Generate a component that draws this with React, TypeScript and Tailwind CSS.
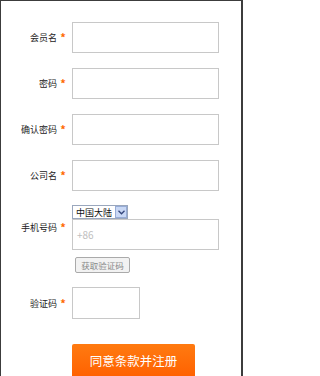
const FONT = { fontFamily: '"Noto Sans CJK SC", "Liberation Sans", sans-serif' };

function Label({ text }: { text: string }) {
  return (
    <div className="flex items-center shrink-0">
      <span className="w-[56px] text-right text-[9px] leading-none text-[#222]">{text}</span>
      <span className="mr-[3px] w-[12px] text-center text-[11px] font-bold leading-none text-[#ff6a00]">*</span>
    </div>
  );
}

function Field({ label, width = "w-[147px]", height = "h-[31px]", className = "" }: { label: string; width?: string; height?: string; className?: string }) {
  return (
    <div className={`flex items-center ${className}`}>
      <Label text={label} />
      <input className={`${width} ${height} border border-[#c8c8c8] bg-white outline-none`} />
    </div>
  );
}

export default function App() {
  return (
    <div
      className="h-[376px] w-[243px] overflow-hidden border-t border-l border-r-2 border-[#3c3c3c] bg-white"
      style={FONT}
    >
      <div className="flex flex-col">
        <Field label="会员名" className="mt-[21px]" />
        <Field label="密码" className="mt-[15px]" />
        <Field label="确认密码" className="mt-[15px]" />
        <Field label="公司名" className="mt-[15px]" />

        <div className="mt-[14px] flex items-center">
          <Label text="手机号码" />
          <div className="flex flex-col">
            <div className="flex h-[14px] w-[56px] items-center border border-[#9aa7bd] bg-white">
              <span className="flex-1 pl-[3px] text-[9px] leading-none text-[#111]">中国大陆</span>
              <span className="flex h-[12px] w-[12px] items-center justify-center border border-[#97acd6] bg-[#c9d8f5]">
                <svg width="7" height="5" viewBox="0 0 7 5">
                  <path d="M0.5 0.8 L3.5 3.8 L6.5 0.8" stroke="#33457a" strokeWidth="1.3" fill="none" />
                </svg>
              </span>
            </div>
            <div className="flex h-[31px] w-[147px] items-center border border-[#c8c8c8] bg-white pl-[4px] text-[10px] text-[#c0c0c0]">
              +86
            </div>
          </div>
        </div>

        <div className="mt-[7px] pl-[74px]">
          <button className="flex h-[16px] w-[55px] items-center justify-center rounded-[2px] border border-[#aaa] bg-[#f2f2f2] text-[8.5px] leading-none text-[#888]">
            获取验证码
          </button>
        </div>

        <Field label="验证码" width="w-[68px]" height="h-[32px]" className="mt-[14px]" />

        <div className="mt-[25px] pl-[71px]">
          <button className="flex h-[34px] w-[123px] items-center justify-center rounded-t-[2px] bg-gradient-to-b from-[#ff7a10] to-[#ff6000] text-[12.5px] text-white">
            同意条款并注册
          </button>
        </div>
      </div>
    </div>
  );
}
